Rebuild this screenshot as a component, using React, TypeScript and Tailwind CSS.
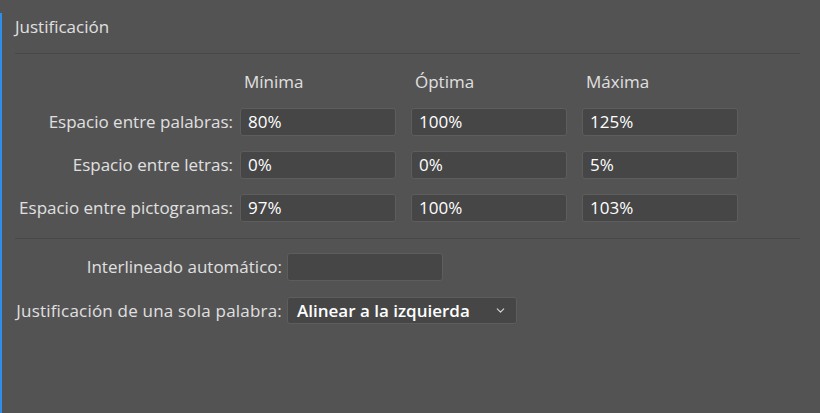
import { ChevronDown } from 'lucide-react';

const rows = [
  { label: 'Espacio entre palabras:', values: ['80%', '100%', '125%'] },
  { label: 'Espacio entre letras:', values: ['0%', '0%', '5%'] },
  { label: 'Espacio entre pictogramas:', values: ['97%', '100%', '103%'] },
];

function Field({ value, className = 'w-[156px]' }: { value?: string; className?: string }) {
  return (
    <div
      className={`${className} h-[28px] flex items-center px-[7px] rounded-[3px] bg-[#464646] border border-[#5d5d5d] text-white text-[17px]`}
    >
      {value}
    </div>
  );
}

export default function App() {
  return (
    <div
      className="w-[820px] h-[413px] bg-[#535353] pt-[13px] overflow-hidden"
      style={{ fontFamily: '"Open Sans", "Liberation Sans", sans-serif' }}
    >
      <div className="h-[400px] border-l-2 border-[#2f8fe8] pl-[13px] pr-[20px]">
        {/* Title */}
        <div className="pt-[4px] leading-[20px] text-[17px] text-[#e0e0e0]">Justificación</div>
        <div className="mt-[16px] h-px bg-[#484848]" />

        {/* Column headers */}
        <div className="mt-[18px] flex leading-[20px] text-[17px] text-[#e0e0e0]">
          <div className="w-[218px]" />
          <div className="ml-[7px] flex gap-[15px]">
            <div className="w-[156px] pl-[4px]">Mínima</div>
            <div className="w-[156px] pl-[4px]">Óptima</div>
            <div className="w-[156px] pl-[4px]">Máxima</div>
          </div>
        </div>

        {/* Spacing rows */}
        <div className="mt-[16px] flex flex-col gap-[15px]">
          {rows.map((row) => (
            <div key={row.label} className="flex items-center">
              <div className="w-[218px] text-right text-[17px] text-[#e0e0e0] whitespace-nowrap">{row.label}</div>
              <div className="ml-[7px] flex gap-[15px]">
                {row.values.map((v, i) => (
                  <Field key={i} value={v} />
                ))}
              </div>
            </div>
          ))}
        </div>

        <div className="mt-[16px] h-px bg-[#484848]" />

        {/* Bottom options */}
        <div className="mt-[14px] flex flex-col gap-[16px]">
          <div className="flex items-center">
            <div className="w-[267px] text-right text-[17px] text-[#e0e0e0] whitespace-nowrap">Interlineado automático:</div>
            <Field className="ml-[5px] w-[156px]" />
          </div>
          <div className="flex items-center">
            <div className="w-[267px] text-right text-[17px] text-[#e0e0e0] whitespace-nowrap tracking-[0.2px]">
              Justificación de una sola palabra:
            </div>
            <div className="ml-[5px] w-[230px] h-[27px] flex items-center justify-between pl-[9px] pr-[9px] rounded-[3px] bg-[#464646] border border-[#5d5d5d] text-white text-[17px] font-semibold">
              <span>Alinear a la izquierda</span>
              <ChevronDown size={13} strokeWidth={2} className="text-[#d8d8d8]" />
            </div>
          </div>
        </div>
      </div>
    </div>
  );
}
